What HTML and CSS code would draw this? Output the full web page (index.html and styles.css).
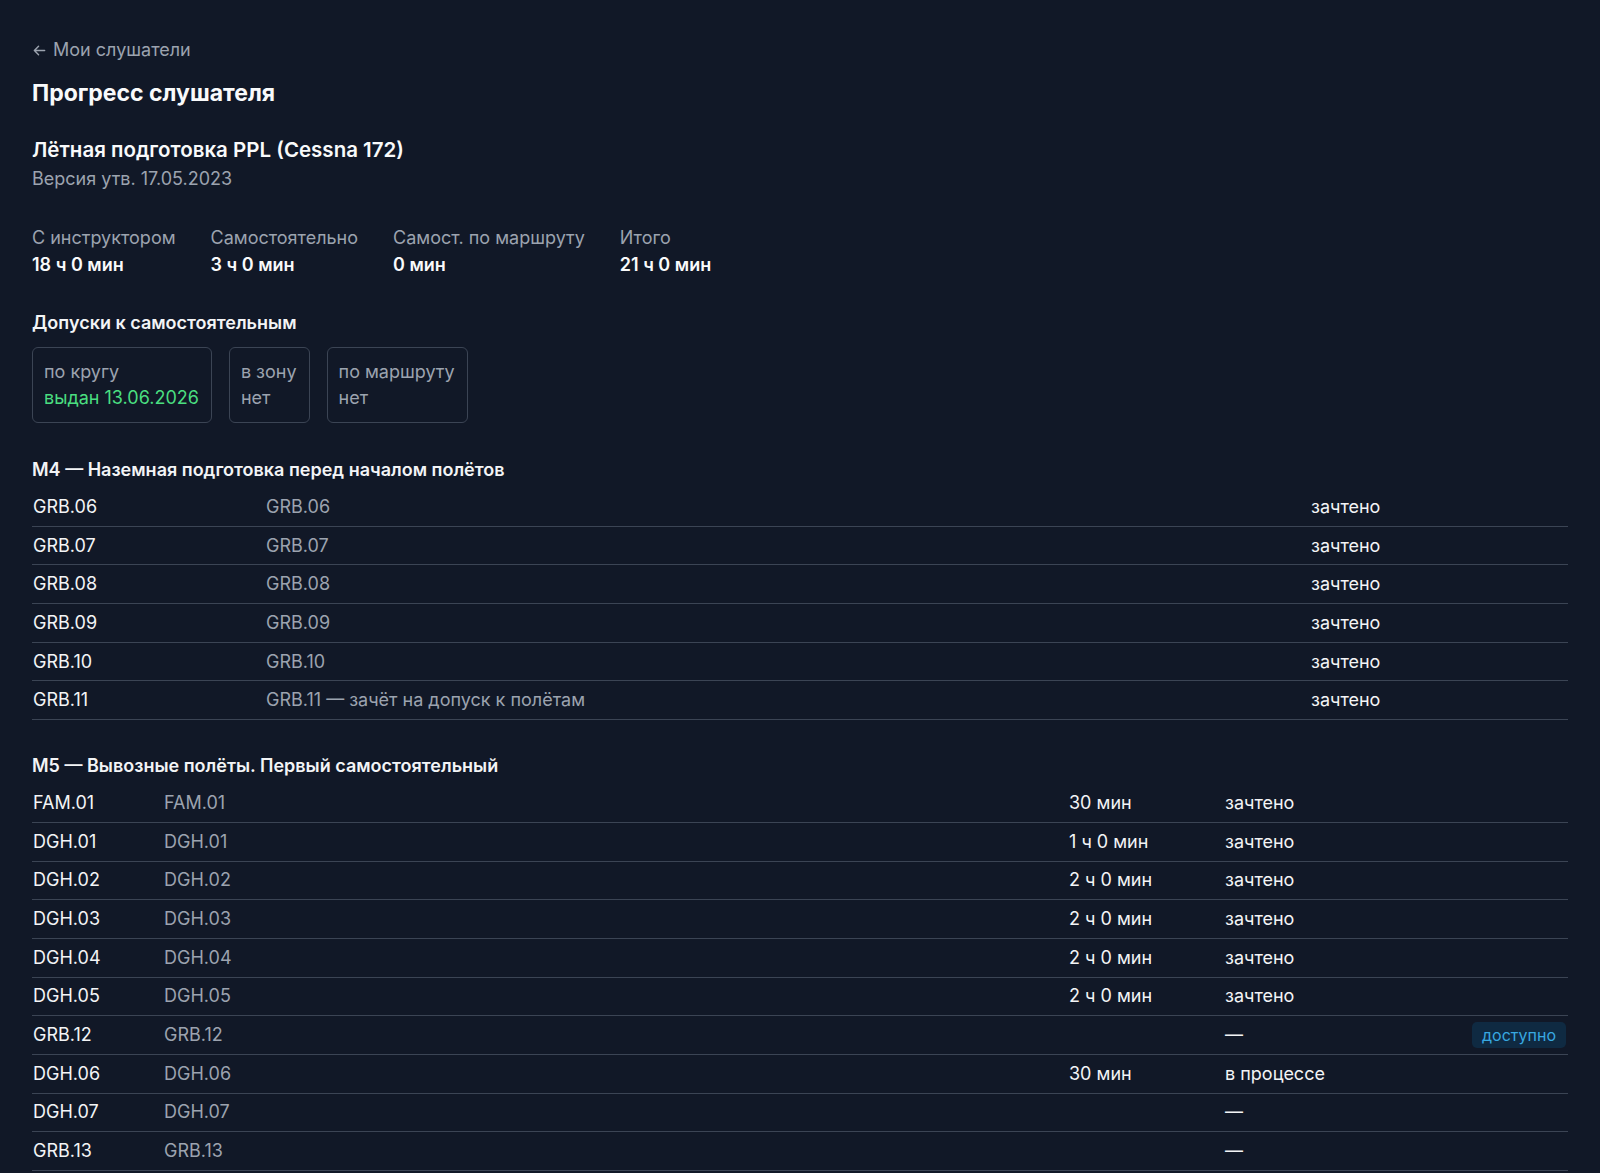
FILE: index.html
```html
<!DOCTYPE html>
<html lang="ru">
<head>
    <meta charset="UTF-8">
    <meta name="viewport" content="width=device-width, initial-scale=1.0">
    <title>Прогресс слушателя</title>
    <link rel="stylesheet" href="styles.css">
</head>
<body>

<div class="page">
    <a class="back-link" href="#">
        <svg class="back-icon" viewBox="0 0 16 16" width="15" height="15">
            <path d="M13.5 8H2.5M7 3.5L2.5 8 7 12.5" fill="none" stroke="currentColor" stroke-width="1.5" stroke-linecap="round" stroke-linejoin="round"/>
        </svg>
        Мои слушатели
    </a>

    <h1 class="page-title">Прогресс слушателя</h1>

    <div class="course">
        <h2 class="course-title">Лётная подготовка PPL (Cessna 172)</h2>
        <div class="course-version">Версия утв. 17.05.2023</div>
    </div>

    <div class="stats">
        <div class="stat">
            <div class="stat-label">С инструктором</div>
            <div class="stat-value">18 ч 0 мин</div>
        </div>
        <div class="stat">
            <div class="stat-label">Самостоятельно</div>
            <div class="stat-value">3 ч 0 мин</div>
        </div>
        <div class="stat">
            <div class="stat-label">Самост. по маршруту</div>
            <div class="stat-value">0 мин</div>
        </div>
        <div class="stat">
            <div class="stat-label">Итого</div>
            <div class="stat-value">21 ч 0 мин</div>
        </div>
    </div>

    <h3 class="section-title">Допуски к самостоятельным</h3>
    <div class="permits">
        <div class="permit">
            <div class="permit-name">по кругу</div>
            <div class="permit-status ok">выдан 13.06.2026</div>
        </div>
        <div class="permit">
            <div class="permit-name">в зону</div>
            <div class="permit-status">нет</div>
        </div>
        <div class="permit">
            <div class="permit-name">по маршруту</div>
            <div class="permit-status">нет</div>
        </div>
    </div>

    <!-- М4 -->
    <h3 class="section-title module-title module-first">М4 — Наземная подготовка перед началом полётов</h3>
    <div class="lessons lessons-ground">
        <div class="lesson"><span class="code">GRB.06</span><span class="name">GRB.06</span><span class="status">зачтено</span></div>
        <div class="lesson"><span class="code">GRB.07</span><span class="name">GRB.07</span><span class="status">зачтено</span></div>
        <div class="lesson"><span class="code">GRB.08</span><span class="name">GRB.08</span><span class="status">зачтено</span></div>
        <div class="lesson"><span class="code">GRB.09</span><span class="name">GRB.09</span><span class="status">зачтено</span></div>
        <div class="lesson"><span class="code">GRB.10</span><span class="name">GRB.10</span><span class="status">зачтено</span></div>
        <div class="lesson"><span class="code">GRB.11</span><span class="name">GRB.11 — зачёт на допуск к полётам</span><span class="status">зачтено</span></div>
    </div>

    <!-- М5 -->
    <h3 class="section-title module-title">М5 — Вывозные полёты. Первый самостоятельный</h3>
    <div class="lessons lessons-flight">
        <div class="lesson"><span class="code">FAM.01</span><span class="name">FAM.01</span><span class="time">30 мин</span><span class="status">зачтено</span><span></span></div>
        <div class="lesson"><span class="code">DGH.01</span><span class="name">DGH.01</span><span class="time">1 ч 0 мин</span><span class="status">зачтено</span><span></span></div>
        <div class="lesson"><span class="code">DGH.02</span><span class="name">DGH.02</span><span class="time">2 ч 0 мин</span><span class="status">зачтено</span><span></span></div>
        <div class="lesson"><span class="code">DGH.03</span><span class="name">DGH.03</span><span class="time">2 ч 0 мин</span><span class="status">зачтено</span><span></span></div>
        <div class="lesson"><span class="code">DGH.04</span><span class="name">DGH.04</span><span class="time">2 ч 0 мин</span><span class="status">зачтено</span><span></span></div>
        <div class="lesson"><span class="code">DGH.05</span><span class="name">DGH.05</span><span class="time">2 ч 0 мин</span><span class="status">зачтено</span><span></span></div>
        <div class="lesson"><span class="code">GRB.12</span><span class="name">GRB.12</span><span class="time"></span><span class="status">—</span><span class="action"><span class="badge">доступно</span></span></div>
        <div class="lesson"><span class="code">DGH.06</span><span class="name">DGH.06</span><span class="time">30 мин</span><span class="status">в процессе</span><span></span></div>
        <div class="lesson"><span class="code">DGH.07</span><span class="name">DGH.07</span><span class="time"></span><span class="status">—</span><span></span></div>
        <div class="lesson"><span class="code">GRB.13</span><span class="name">GRB.13</span><span class="time"></span><span class="status">—</span><span></span></div>
    </div>
</div>

</body>
</html>
```

FILE: styles.css
```css
body {
    margin: 0;
    padding: 0;
    background-color: #111827;
    color: #f3f4f6;
    font-family: Inter, "Noto Sans", Arial, sans-serif;
    font-size: 18px;
}

.page {
    padding: 38px 32px 0 32px;
}

.back-link {
    display: inline-flex;
    align-items: center;
    gap: 6px;
    color: #9ca3af;
    text-decoration: none;
    line-height: 24px;
}

.back-icon {
    margin-top: 1px;
}

.page-title {
    margin: 17px 0 0 0;
    font-size: 23px;
    line-height: 28px;
    font-weight: 700;
    color: #f9fafb;
}

.course {
    margin-top: 29px;
}

.course-title {
    margin: 0;
    font-size: 20.5px;
    line-height: 28px;
    font-weight: 600;
    color: #f9fafb;
}

.course-version {
    margin-top: 3px;
    line-height: 24px;
    color: #9ca3af;
}

.stats {
    display: flex;
    gap: 35px;
    margin-top: 34px;
}

.stat-label {
    color: #9ca3af;
    line-height: 26px;
}

.stat-value {
    margin-top: 1px;
    font-weight: 600;
    line-height: 26px;
    color: #f9fafb;
}

.section-title {
    margin: 33px 0 0 0;
    font-size: 18px;
    line-height: 24px;
    font-weight: 600;
    color: #f3f4f6;
}

.permits {
    display: flex;
    gap: 17px;
    margin-top: 12px;
}

.permit {
    border: 1px solid #3b4454;
    border-radius: 6px;
    padding: 11px 12px 11px 11px;
    line-height: 26px;
}

.permit-name,
.permit-status {
    color: #9ca3af;
}

.permit-status.ok {
    color: #4ade80;
}

.module-title {
    margin-top: 34px;
}

.module-first {
    margin-top: 35px;
}

.lessons {
    margin-top: 6px;
}

.lesson {
    display: grid;
    align-items: center;
    height: 37.7px;
    border-bottom: 1px solid #3b4454;
    line-height: 24px;
}

.lessons-ground .lesson {
    grid-template-columns: 234px 1045px 1fr;
}

.lessons-flight .lesson {
    grid-template-columns: 132px 905px 156px 1fr 120px;
}

.code {
    padding-left: 1px;
    color: #f3f4f6;
}

.name {
    color: #9ca3af;
}

.time,
.status {
    color: #f3f4f6;
}

.action {
    text-align: right;
}

.badge {
    display: inline-block;
    margin-right: 2px;
    padding: 0 10px;
    line-height: 26px;
    font-size: 16px;
    border-radius: 5px;
    background-color: #0f2a42;
    color: #38a8e0;
}
```
